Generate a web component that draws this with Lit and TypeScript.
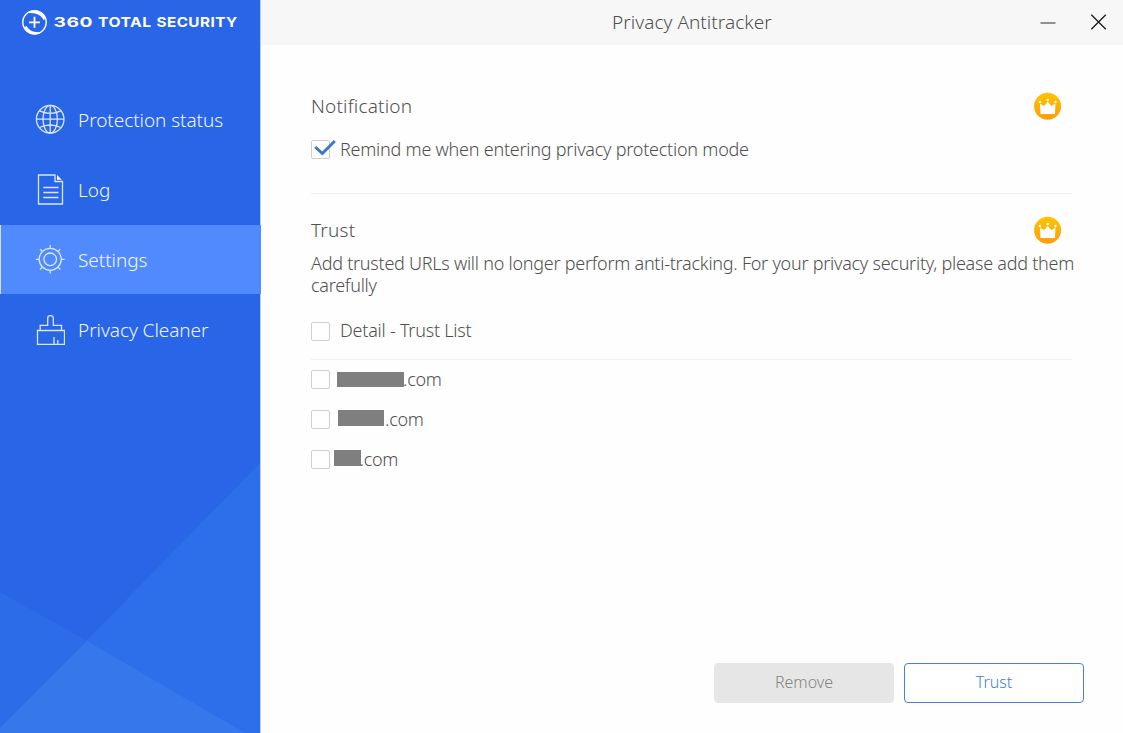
import { LitElement, html, svg, css } from "lit";
import { customElement, property } from "lit/decorators.js";

const icons: Record<string, unknown> = {
  globe: svg`<circle cx="15.2" cy="15.2" r="13.8"/><ellipse cx="15.2" cy="15.2" rx="7.2" ry="13.8"/><path d="M15.2 1.4v27.6M1.4 15.2h27.600M4.500 6.900q10.700 5 21.400 0M4.500 23.500q10.700-5 21.400 0"/>`,
  log: svg`<path d="M20 1H3.5v29h24V7.500H20z"/><path d="M22 1v4.800h4.800z" fill="#fff" stroke="none"/><path d="M8.300 13.500h15.200M8.300 18.500h15.200M8.300 23.500h15.200"/>`,
  gear: svg`<circle cx="15.200" cy="15.300" r="11"/><circle cx="15.200" cy="15.300" r="6.300"/><path d="M15.200 1v3.300M15.200 26.300v3.300M.8 15.300h3.400M26.200 15.300h3.400M5 5.100l2.400 2.400M23 23.100l2.400 2.400M5 25.500l2.400-2.400M23 7.500l2.400-2.400"/>`,
  brush: svg`<path d="M5.200 16v-4.700h7.500V4.200a2.500 2.500 0 0 1 2.500-2.500h.6a2.500 2.500 0 0 1 2.500 2.500v7.100h8.200V16"/><path d="M2.500 16.500h27v13.800h-27zM19 30v-7M22.800 30v-4"/>`,
};

@customElement("check-box")
class CheckBox extends LitElement {
  @property({ type: Boolean }) checked = false;
  static styles = css`
    :host { display: block; width: 19px; height: 19px; box-sizing: border-box; border: 1px solid #cfcfcf; border-radius: 2px; flex: none; position: relative; background: #fff; }
    .tick { position: absolute; left: 1px; top: -3px; overflow: visible; }
  `;
  render() {
    return this.checked
      ? html`<svg class="tick" width="24" height="20"><path d="M2.200 9l7.200 6.600L21.800 3" fill="none" stroke="#3777cc" stroke-width="2.900"/></svg>`
      : null;
  }
}

@customElement("crown-badge")
class CrownBadge extends LitElement {
  static styles = css`:host, svg { display: block; }`;
  render() {
    return html`<svg width="28" height="28" viewBox="0 0 28 28">
      <defs><linearGradient id="g" x1="0" y1="0" x2="0" y2="1"><stop offset="0" stop-color="#ffc400"/><stop offset="1" stop-color="#ff9c0c"/></linearGradient></defs>
      <circle cx="13.600" cy="14.300" r="13.500" fill="url(#g)"/>
      <g fill="#fff"><path d="M6 11.800l4.200 2.200 3.500-4.200 3.500 4.200 4.200-2.200-.4 10.200H6.500z"/>
      <circle cx="6" cy="10" r="1.200"/><circle cx="13.700" cy="8" r="1.300"/><circle cx="21.500" cy="10" r="1.200"/></g>
    </svg>`;
  }
}

@customElement("app-root")
class AppRoot extends LitElement {
  static styles = css`
    :host { display: grid; grid-template-columns: 261px minmax(0, 1fr); width: 1123px; height: 733px; overflow: hidden; background: #fefefe; font-family: "Noto Sans", "Open Sans", sans-serif; font-weight: 300; font-size: 18px; letter-spacing: -0.235px; color: #505050; white-space: nowrap; }
    * { box-sizing: border-box; }
    svg { display: block; flex: none; }
    .side { display: flex; flex-direction: column; position: relative; background: #2965e7; border-right: 1px solid #b8cdf8; }
    .facets { position: absolute; left: 0; bottom: 0; }
    .brand { height: 85px; }
    .nav { display: flex; flex-direction: column; color: #f2f7ff; font-size: 19px; letter-spacing: -0.060px; }
    .item { height: 70px; display: flex; align-items: center; gap: 13px; padding-left: 35px; padding-bottom: 1px; }
    .item svg { fill: none; stroke: #d8e7ff; stroke-width: 1.300; }
    .on { background: #518afd; border-left: 1px solid #cfe0ff; padding-left: 34px; margin-right: -1px; height: 69px; margin-bottom: 1px; padding-bottom: 0; }
    .main { display: flex; flex-direction: column; }
    .title { height: 45px; background: #f7f7f7; display: flex; align-items: center; padding: 0 16px 1px 351px; font-size: 19px; letter-spacing: 0.040px; }
    .win { margin-left: auto; display: flex; gap: 34px; }
    .body { flex: 1; padding: 47px 39px 30px 50px; display: flex; flex-direction: column; }
    .head { display: flex; justify-content: space-between; align-items: center; height: 28px; padding-right: 22px; font-size: 19px; letter-spacing: 0.200px; }
    .row { display: flex; align-items: center; gap: 10px; }
    .remind { margin-top: 16px; height: 26px; }
    .rule { height: 1px; width: 761px; background: #eee; flex: none; }
    .r1 { margin: 31px 0 22px; }
    .desc { margin-top: 8px; line-height: 22px; letter-spacing: -0.255px; }
    .detail { margin-top: 22px; height: 26px; }
    .detail span { margin-top: -2px; }
    .r2 { margin: 15px 0 -1px; }
    .site { height: 40px; gap: 0; }
    .mask { background: #7f7f7f; height: 16px; margin-top: -2px; }
    .m1 { margin-left: 7px; width: 67px; height: 15px; margin-top: 0; }
    .m1 + span { margin-left: -1px; }
    .m2 { margin-left: 8px; width: 46px; }
    .m2 + span { margin-left: 1px; }
    .m3 { margin-left: 4px; width: 27px; }
    .m3 + span { margin-left: -1.500px; }
    .foot { margin-top: auto; display: flex; justify-content: flex-end; gap: 10px; }
    .btn { width: 180px; height: 40px; border-radius: 4px; font: inherit; font-size: 16px; letter-spacing: 0; padding: 0 0 2px; border: 1px solid #4583dc; background: #fff; color: #3f7ed8; }
    .off { background: #e6e6e6; border-color: #e6e6e6; color: #858585; }
  `;
  item(icon: string, label: string, on = false) {
    return html`<div class="item ${on ? "on" : ""}"><svg width="30" height="31">${icons[icon]}</svg><span>${label}</span></div>`;
  }
  render() {
    return html`
      <aside class="side">
        <svg class="facets" width="260" height="270">
          <path d="M260 0V270H0V266z" fill="#2d6fea"/>
          <path d="M0 129L87 178 0 265z" fill="#2c6ce8"/>
          <path d="M87 178L245 270H0v-5z" fill="#3677ec"/>
        </svg>
        <div class="brand"><svg width="260" height="45" fill="#fff">
          <circle cx="34.500" cy="22.300" r="11.700" fill="none" stroke="#fff" stroke-width="1.400"/>
          <path d="M27 12.700a12.500 12.500 0 0 1 18.500 4.300l-1.500 3.500c-3-5.300-7.500-8.200-17-7.300zM42 31.900a12.500 12.500 0 0 1-18.500-4.300l3-1.600c2.500 4.500 7 7 15.500 5.900z"/>
          <path d="M29 22.300h11M34.500 16.800v11" stroke="#fff" stroke-width="1.800"/>
          <g font-family="Inter" font-weight="700" font-size="13.300" letter-spacing="0.400">
            <text x="53.500" y="27.300" textLength="39.500" lengthAdjust="spacingAndGlyphs">360</text>
            <text x="98" y="27.300" textLength="53.500" lengthAdjust="spacingAndGlyphs">TOTAL</text>
            <text x="156.500" y="27.300" textLength="81" lengthAdjust="spacingAndGlyphs">SECURITY</text>
          </g></svg></div>
        <nav class="nav">
          ${this.item("globe", "Protection status")}
          ${this.item("log", "Log")}
          ${this.item("gear", "Settings", true)}
          ${this.item("brush", "Privacy Cleaner")}
        </nav>
      </aside>
      <main class="main">
        <header class="title"><span>Privacy Antitracker</span>
          <div class="win">
            <svg width="16" height="16"><path d="M.5 9h15" stroke="#919191" stroke-width="2"/></svg>
            <svg width="17" height="16"><path d="M1.300.800l14.500 14.500M15.800.800L1.300 15.300" stroke="#1c1c1c" stroke-width="1.300"/></svg>
          </div>
        </header>
        <section class="body">
          <div class="head"><span>Notification</span><crown-badge></crown-badge></div>
          <div class="row remind"><check-box checked></check-box><span>Remind me when entering privacy protection mode</span></div>
          <div class="rule r1"></div>
          <div class="head"><span>Trust</span><crown-badge></crown-badge></div>
          <div class="desc">Add trusted URLs will no longer perform anti-tracking. For your privacy security, please add them<br>carefully</div>
          <div class="row detail"><check-box></check-box><span>Detail - Trust List</span></div>
          <div class="rule r2"></div>
          <div class="row site"><check-box></check-box><i class="mask m1"></i><span>.com</span></div>
          <div class="row site"><check-box></check-box><i class="mask m2"></i><span>.com</span></div>
          <div class="row site"><check-box></check-box><i class="mask m3"></i><span>.com</span></div>
          <div class="foot"><button class="btn off">Remove</button><button class="btn">Trust</button></div>
        </section>
      </main>`;
  }
}
